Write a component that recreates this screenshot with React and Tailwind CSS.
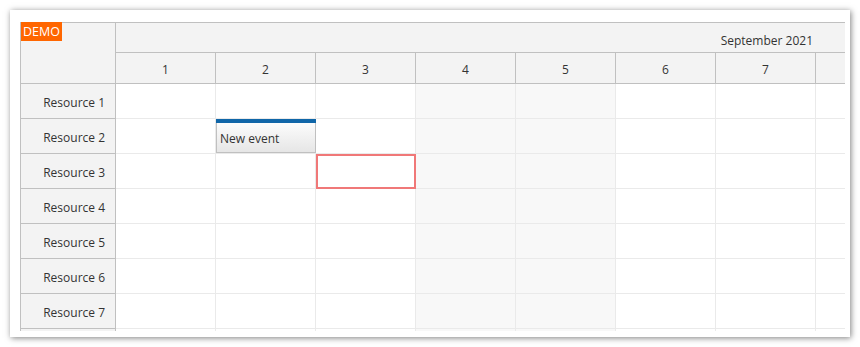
const days = [1, 2, 3, 4, 5, 6, 7, 8]
const resources = [1, 2, 3, 4, 5, 6, 7, 8]
const weekend = [4, 5]

export default function App() {
  return (
    <div className="w-[860px] h-[347px] bg-white pt-[10px] pl-[10px] font-['Open_Sans','Noto_Sans',sans-serif] text-[12px] text-[#333]">
      <div className="w-[840px] h-[327px] bg-white shadow-[1px_1px_6px_rgba(0,0,0,0.5)] pt-[12px] pl-[10px]">
        <div className="w-[825px] h-[309px] overflow-hidden">
          {/* header */}
          <div className="flex h-[62px]">
            <div className="relative w-[96px] shrink-0 border border-[#c0c0c0] bg-[#f3f3f3]">
              <div className="absolute top-[-1px] left-0 h-[19px] px-[2px] bg-[#ff6600] text-white text-[12.5px] leading-[20px]">DEMO</div>
            </div>
            <div className="flex-1 min-w-0 overflow-hidden border-t border-b border-[#c0c0c0] bg-[#f3f3f3]">
              <div className="h-[30px] border-b border-[#c0c0c0] flex items-end justify-end pr-[32px] pb-[2px]">September 2021</div>
              <div className="flex h-[30px]">
                {days.map(d => (
                  <div key={d} className="w-[100px] shrink-0 border-r border-[#c0c0c0] flex items-center justify-center pt-[3px]">{d < 8 ? d : ''}</div>
                ))}
              </div>
            </div>
          </div>
          {/* body */}
          <div className="flex">
            <div className="w-[96px] shrink-0">
              {resources.map(r => (
                <div key={r} className="h-[35px] border-l border-r border-b border-[#c0c0c0] bg-[#f3f3f3] flex items-center justify-end pr-[10px] pt-[3px]">
                  {r < 8 ? `Resource ${r}` : ''}
                </div>
              ))}
            </div>
            <div className="relative flex-1 min-w-0 overflow-hidden">
              {resources.map(r => (
                <div key={r} className="flex h-[35px]">
                  {days.map(d => (
                    <div key={d} className={`w-[100px] shrink-0 border-r border-b border-[#eaeaea] ${weekend.includes(d) ? 'bg-[#f8f8f8]' : 'bg-white'}`} />
                  ))}
                </div>
              ))}
              {/* event */}
              <div className="absolute left-[100px] top-[35px] w-[100px] h-[34px] border-l border-r border-b border-[#c0c0c0] bg-gradient-to-b from-white to-[#e6e6e6]">
                <div className="h-[4px] bg-[#1066a8] -mx-px" />
                <div className="pl-[3px] leading-[31px]">New event</div>
              </div>
              {/* selection */}
              <div className="absolute left-[200px] top-[70px] w-[100px] h-[35px] border-2 border-[#f07878]" />
            </div>
          </div>
        </div>
      </div>
    </div>
  )
}
